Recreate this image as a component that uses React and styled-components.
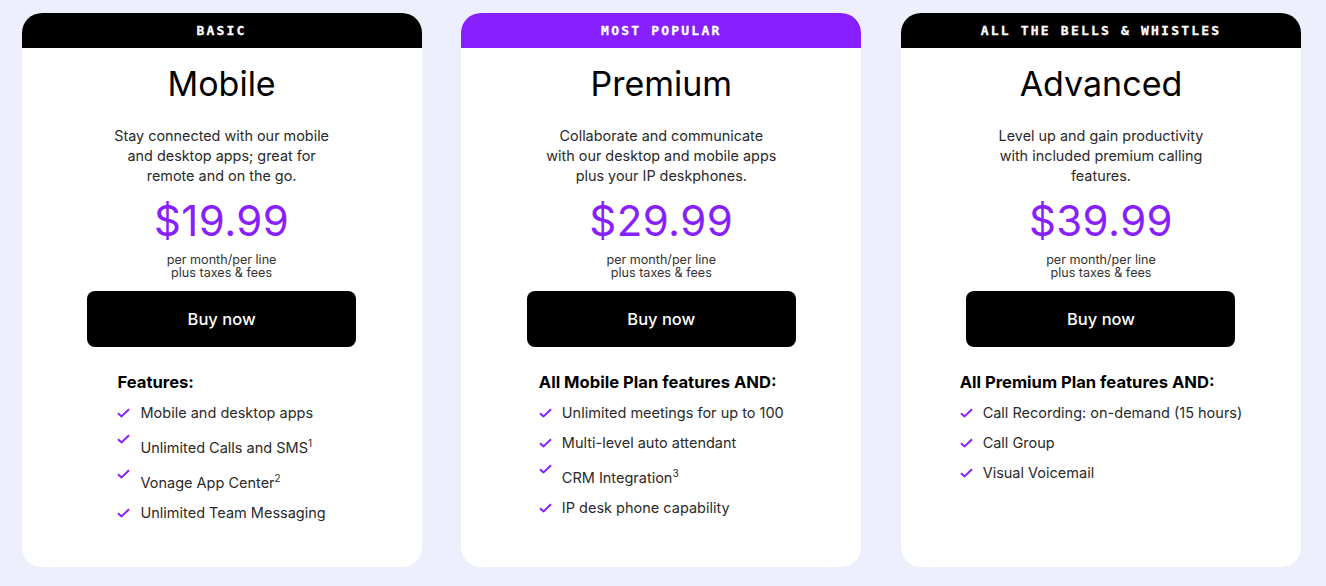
import React from 'react';
import styled, { createGlobalStyle } from 'styled-components';

const GlobalStyle = createGlobalStyle`
  html, body {
    margin: 0;
    padding: 0;
    background: #eeeffc;
  }
  body {
    font-family: Inter, "Liberation Sans", Arial, sans-serif;
    color: #1e1e1e;
  }
`;

const purple = '#871fff';

const Page = styled.div`
  display: grid;
  grid-template-columns: repeat(3, 400px);
  gap: 39.7px;
  padding: 13px 24px 21px 21.6px;
  align-items: stretch;
`;

const Card = styled.div`
  background: #fff;
  border-radius: 20px;
  overflow: hidden;
  display: flex;
  flex-direction: column;
  align-items: center;
  padding-bottom: 44px;
`;

const Band = styled.div`
  align-self: stretch;
  height: 35px;
  display: flex;
  align-items: center;
  justify-content: center;
  background: ${(p) => (p.$popular ? purple : '#000')};
  color: #fff;
  font-family: "DejaVu Sans Mono", "Liberation Mono", monospace;
  font-weight: bold;
  font-size: 13px;
  letter-spacing: 2.2px;
  text-transform: uppercase;
  -webkit-text-stroke: 0.3px #fff;
`;

const Title = styled.h2`
  margin: 16px 0 0;
  font-size: 34px;
  line-height: 40px;
  font-weight: 400;
  color: #000;
`;

const Description = styled.p`
  margin: 22px 0 0;
  width: 236px;
  text-align: center;
  font-size: 14.4px;
  line-height: 20px;
  color: #2a2a2a;
`;

const Price = styled.div`
  margin-top: 11px;
  font-size: 42px;
  line-height: 48px;
  color: ${purple};
  letter-spacing: 0.4px;
`;

const Terms = styled.div`
  margin-top: 8px;
  font-size: 12.6px;
  line-height: 13px;
  text-align: center;
  color: #333;
`;

const BuyButton = styled.button`
  margin-top: 12px;
  width: 269px;
  height: 56px;
  border: none;
  border-radius: 8px;
  background: #000;
  color: #fff;
  font-family: inherit;
  font-size: 16.5px;
  font-weight: 500;
  cursor: pointer;
`;

const FeatureBlock = styled.div`
  margin-top: 25px;
  display: flex;
  flex-direction: column;
`;

const FeatureHeading = styled.div`
  font-size: 16.6px;
  line-height: 20px;
  font-weight: 700;
  color: #000;
`;

const FeatureList = styled.ul`
  list-style: none;
  margin: 11px 0 0;
  padding: 0;
  display: flex;
  flex-direction: column;
  gap: 10px;
`;

const FeatureItem = styled.li`
  display: flex;
  align-items: flex-start;
  gap: 10px;
  font-size: 14.5px;
  line-height: 20px;
  color: #2a2a2a;

  sup {
    font-size: 10px;
    line-height: 20px;
  }
`;

const CheckIcon = styled.svg`
  flex: none;
  width: 13px;
  height: 10px;
  margin-top: ${(p) => (p.$raised ? 1 : 5)}px;
`;

const Check = ({ raised }) => (
  <CheckIcon viewBox="0 0 13 10" $raised={raised}>
    <path d="M1 5.2 L4.6 8.4 L12 1.2" fill="none" stroke={purple} strokeWidth="2" strokeLinejoin="round" />
  </CheckIcon>
);

const plans = [
  {
    band: 'Basic',
    name: 'Mobile',
    description: 'Stay connected with our mobile and desktop apps; great for remote and on the go.',
    price: '$19.99',
    heading: 'Features:',
    features: [
      ['Mobile and desktop apps'],
      ['Unlimited Calls and SMS', '1'],
      ['Vonage App Center', '2'],
      ['Unlimited Team Messaging'],
    ],
  },
  {
    band: 'Most popular',
    popular: true,
    name: 'Premium',
    description: 'Collaborate and communicate with our desktop and mobile apps plus your IP deskphones.',
    price: '$29.99',
    heading: 'All Mobile Plan features AND:',
    features: [
      ['Unlimited meetings for up to 100'],
      ['Multi-level auto attendant'],
      ['CRM Integration', '3'],
      ['IP desk phone capability'],
    ],
  },
  {
    band: 'All the bells & whistles',
    name: 'Advanced',
    description: 'Level up and gain productivity with included premium calling features.',
    price: '$39.99',
    heading: 'All Premium Plan features AND:',
    features: [
      ['Call Recording: on-demand (15 hours)'],
      ['Call Group'],
      ['Visual Voicemail'],
    ],
  },
];

export default function App() {
  return (
    <>
      <GlobalStyle />
      <Page>
        {plans.map((plan) => (
          <Card key={plan.name}>
            <Band $popular={plan.popular}>{plan.band}</Band>
            <Title>{plan.name}</Title>
            <Description>{plan.description}</Description>
            <Price>{plan.price}</Price>
            <Terms>
              per month/per line
              <br />
              plus taxes &amp; fees
            </Terms>
            <BuyButton>Buy now</BuyButton>
            <FeatureBlock>
              <FeatureHeading>{plan.heading}</FeatureHeading>
              <FeatureList>
                {plan.features.map(([text, note]) => (
                  <FeatureItem key={text}>
                    <Check raised={!!note} />
                    <span>
                      {text}
                      {note && <sup>{note}</sup>}
                    </span>
                  </FeatureItem>
                ))}
              </FeatureList>
            </FeatureBlock>
          </Card>
        ))}
      </Page>
    </>
  );
}
